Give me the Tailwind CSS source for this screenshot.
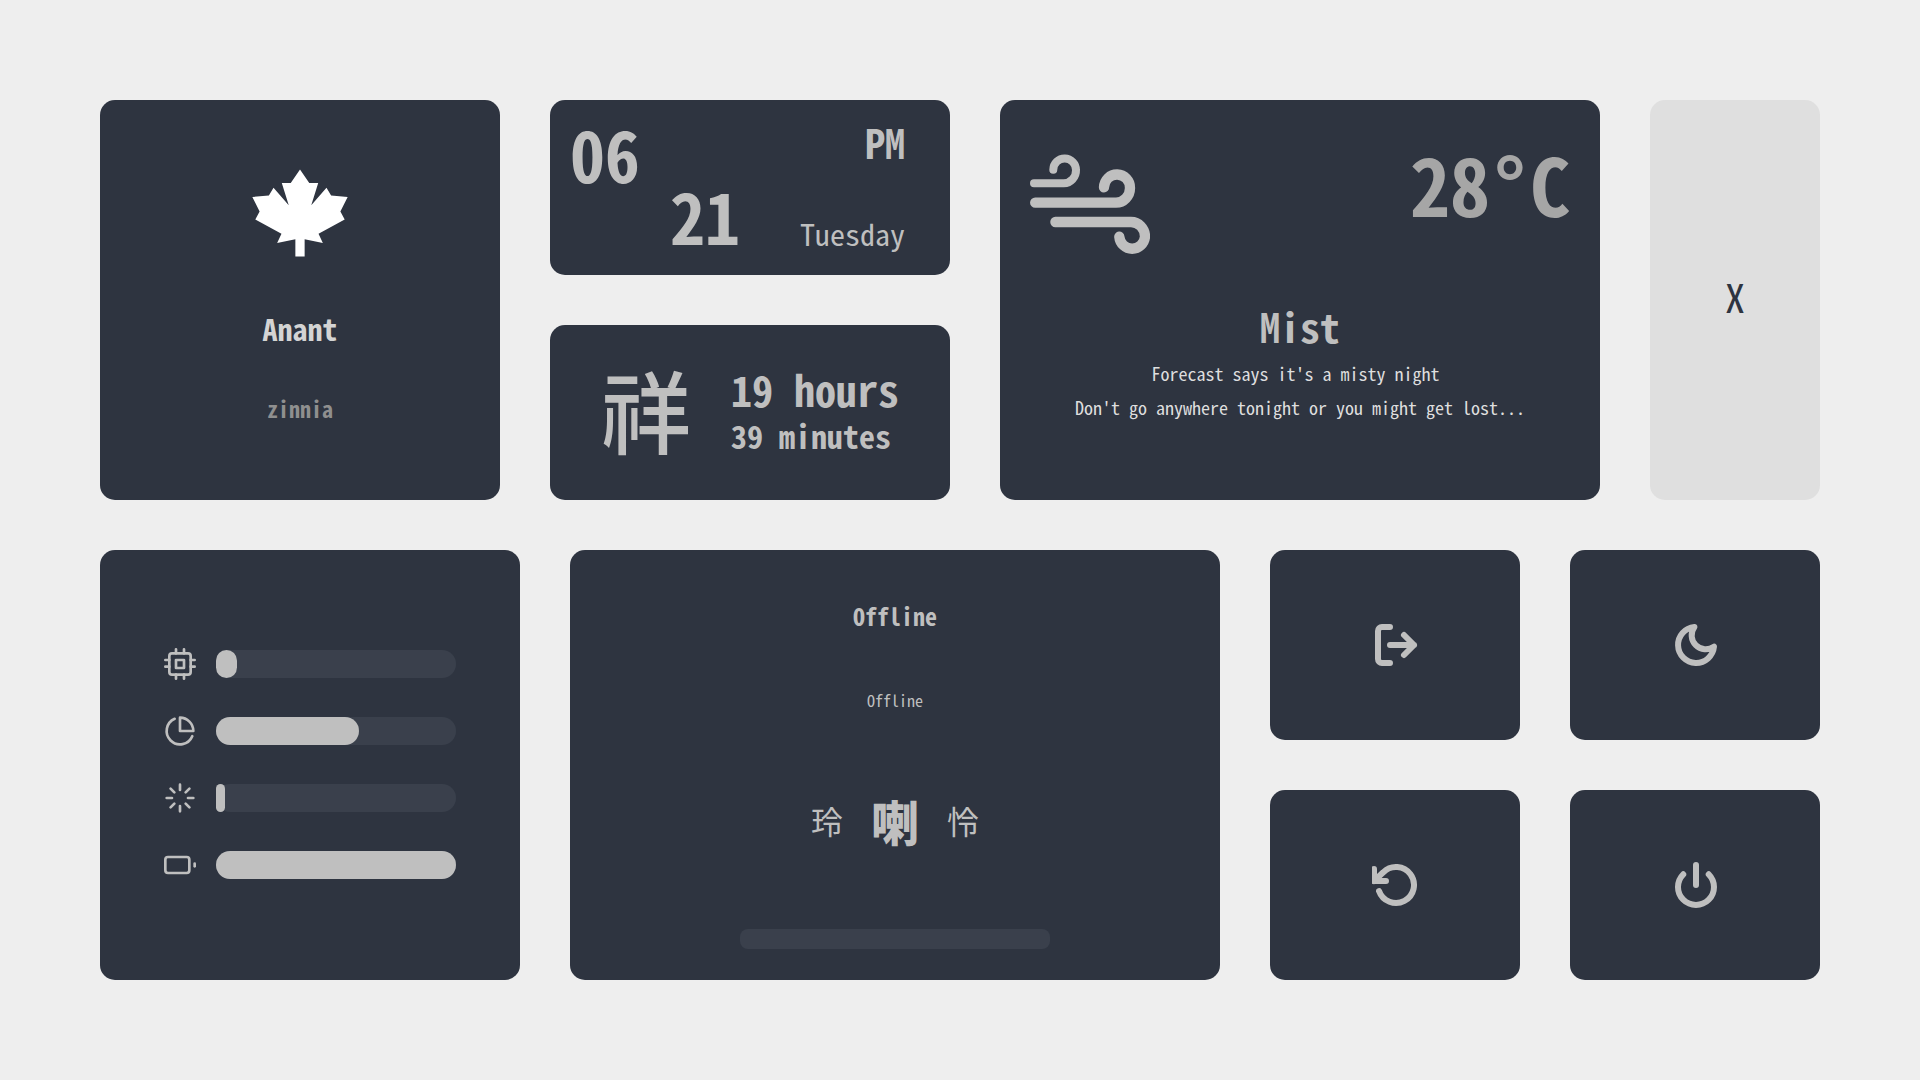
<!DOCTYPE html>
<html lang="en">
<head>
<meta charset="utf-8">
<title>Dashboard</title>
<script src="https://cdn.jsdelivr.net/npm/@tailwindcss/browser@4"></script>
</head>
<body class="min-h-screen bg-[#eeeeee] p-[100px] font-['Noto_Sans_Mono_CJK_JP','DejaVu_Sans_Mono','Noto_Sans_CJK_JP',monospace] text-[#bfbfbf]">
<main class="flex flex-col gap-[50px]">

  <div class="grid min-h-[400px] grid-cols-[400fr_400fr_600fr_170fr] gap-[50px]">
    <!-- Profile -->
    <section class="flex flex-col items-center rounded-[15px] bg-[#2e3440] pt-[69px]">
      <svg class="h-[88px] w-[96px] fill-white" viewBox="485 238 290 263" aria-hidden="true"><polygon points="630,238 658,279 685,279 664,346 710,293 724,317 774,321 752,365 765,389 686,432 699,460 644,449 644,501 616,501 616,449 561,460 574,432 495,389 508,365 486,321 536,317 550,293 596,346 575,279 602,279"/></svg>
      <h1 class="mt-[51px] text-[30px] leading-[40px] font-bold text-[#d4d4d4]">Anant</h1>
      <p class="mt-[45px] text-[22px] leading-[30px] font-bold text-[#8f8f8f]">zinnia</p>
    </section>

    <div class="grid grid-rows-2 gap-[50px]">
      <!-- Clock -->
      <section class="flex justify-between rounded-[15px] bg-[#2e3440] py-[22px] pr-[45px] pl-5">
        <div class="text-[70px] leading-[62px] font-bold">
          <div>06</div>
          <div class="pl-[100px]">21</div>
        </div>
        <div class="flex flex-col items-end justify-between leading-[40px]">
          <div class="text-[40px] font-bold">PM</div>
          <div class="text-[30px]">Tuesday</div>
        </div>
      </section>
      <!-- Uptime -->
      <section class="flex items-center justify-center gap-[40px] rounded-[15px] bg-[#2e3440]">
        <div class="pb-2.5 font-['Noto_Sans_CJK_KR',sans-serif] text-[90px] leading-[90px] font-medium">祥</div>
        <div class="font-bold">
          <div class="text-[42px] leading-[44px]">19 hours</div>
          <div class="text-[32px] leading-[48px]">39 minutes</div>
        </div>
      </section>
    </div>

    <!-- Weather -->
    <section class="rounded-[15px] bg-[#2e3440] px-[30px] pt-[42px]">
      <div class="flex items-start justify-between">
        <svg class="mt-3 h-[102px] w-[120px]" viewBox="0 0 120 102" fill="none" stroke="currentColor" stroke-linecap="round" aria-hidden="true">
          <path stroke-width="8" d="M4 29.3H33.7A12.8 12.8 0 0 0 46 16A11.35 11.35 0 0 0 23.3 15.7"/>
          <path stroke-width="10.3" d="M5.2 48.7H86A14 14.7 0 0 0 100 34A13 13.2 0 0 0 74 33.4"/>
          <path stroke-width="10.3" d="M25.4 68H101A14 14.7 0 0 1 115 82.7A12.9 13.2 0 0 1 89.3 82.7"/>
        </svg>
        <div class="text-[80px] leading-[80px] font-bold text-[#a6a6a6]">28<span class="inline-block w-10 text-center">°</span>C</div>
      </div>
      <div class="mt-[46px] text-center">
        <h2 class="text-[40px] leading-[48px] font-bold">Mist</h2>
        <p class="mt-1.5 text-[18px] leading-[34px] text-[#dedede]">Forecast says it's a misty night&nbsp;<br>Don't go anywhere tonight or you might get lost...</p>
      </div>
    </section>

    <button type="button" aria-label="Close" class="rounded-[15px] bg-[#dfdfdf] pb-2 text-[40px] leading-[40px] text-[#2e3440]">X</button>
  </div>

  <div class="grid min-h-[430px] grid-cols-[420fr_650fr_250fr_250fr] gap-[50px]">
    <!-- System usage -->
    <section class="flex flex-col justify-center gap-[39px] rounded-[15px] bg-[#2e3440] px-[64px] pb-0.5">
      <div class="flex h-7 items-center gap-5">
        <svg class="size-8 shrink-0" viewBox="0 0 24 24" fill="none" stroke="currentColor" stroke-width="2" stroke-linecap="round" stroke-linejoin="round" aria-hidden="true"><rect x="4" y="4" width="16" height="16" rx="2"/><rect x="9" y="9" width="6" height="6"/><path d="M9 1v3M15 1v3M9 20v3M15 20v3M20 9h3M20 14h3M1 9h3M1 14h3"/></svg>
        <div role="progressbar" aria-label="CPU" aria-valuenow="9" class="h-7 flex-1 rounded-full bg-[#3a404c]"><div class="h-full rounded-full bg-[#bfbfbf]" style="width:8.8%"></div></div>
      </div>
      <div class="flex h-7 items-center gap-5">
        <svg class="size-8 shrink-0" viewBox="0 0 24 24" fill="none" stroke="currentColor" stroke-width="2" stroke-linecap="round" stroke-linejoin="round" aria-hidden="true"><path d="M21.21 15.89A10 10 0 1 1 8 2.83"/><path d="M22 12A10 10 0 0 0 12 2v10z"/></svg>
        <div role="progressbar" aria-label="Memory" aria-valuenow="60" class="h-7 flex-1 rounded-full bg-[#3a404c]"><div class="h-full rounded-full bg-[#bfbfbf]" style="width:59.6%"></div></div>
      </div>
      <div class="flex h-7 items-center gap-5">
        <svg class="size-8 shrink-0" viewBox="0 0 24 24" fill="none" stroke="currentColor" stroke-width="2" stroke-linecap="round" stroke-linejoin="round" aria-hidden="true"><path d="M12 2v4M12 18v4M4.93 4.93l2.83 2.83M16.24 16.24l2.83 2.83M2 12h4M18 12h4M4.93 19.07l2.83-2.83M16.24 7.76l2.83-2.83"/></svg>
        <div role="progressbar" aria-label="Brightness" aria-valuenow="4" class="h-7 flex-1 rounded-full bg-[#3a404c]"><div class="h-full rounded-full bg-[#bfbfbf]" style="width:3.75%"></div></div>
      </div>
      <div class="flex h-7 items-center gap-5">
        <svg class="size-8 shrink-0" viewBox="0 0 24 24" fill="none" stroke="currentColor" stroke-width="2" stroke-linecap="round" stroke-linejoin="round" aria-hidden="true"><rect x="1" y="6" width="18" height="12" rx="2"/><path d="M23 13v-2"/></svg>
        <div role="progressbar" aria-label="Battery" aria-valuenow="100" class="h-7 flex-1 rounded-full bg-[#3a404c]"><div class="h-full rounded-full bg-[#bfbfbf]" style="width:100%"></div></div>
      </div>
    </section>

    <!-- Music player -->
    <section class="flex flex-col items-center rounded-[15px] bg-[#2e3440] pt-[50px]">
      <h2 class="text-[24px] leading-[32px] font-bold">Offline</h2>
      <p class="mt-[56px] text-[16px] leading-[24px]">Offline</p>
      <div class="mt-[84px] flex items-center gap-7 font-['Noto_Sans_CJK_KR',sans-serif]">
        <button type="button" aria-label="Previous" class="text-[32px] leading-[48px]">玲</button>
        <button type="button" aria-label="Play" class="text-[48px] leading-[48px] font-black">喇</button>
        <button type="button" aria-label="Next" class="text-[32px] leading-[48px]">怜</button>
      </div>
      <input type="range" aria-label="Track position" min="0" max="100" value="0" class="mt-[85px] h-5 w-[310px] appearance-none rounded-lg bg-[#3a404c] [&::-webkit-slider-thumb]:size-0 [&::-webkit-slider-thumb]:appearance-none">
    </section>

    <!-- Session controls -->
    <div class="col-span-2 grid grid-cols-2 grid-rows-2 gap-[50px]">
      <button type="button" aria-label="Log out" class="flex items-center justify-center rounded-[15px] bg-[#2e3440] pl-0.5">
        <svg class="size-12" viewBox="0 0 24 24" fill="none" stroke="currentColor" stroke-width="3" stroke-linecap="round" stroke-linejoin="round"><path d="M9 21H5a2 2 0 0 1-2-2V5a2 2 0 0 1 2-2h4"/><path d="M16 17l5-5-5-5M21 12H9"/></svg>
      </button>
      <button type="button" aria-label="Sleep" class="flex items-center justify-center rounded-[15px] bg-[#2e3440] pl-0.5">
        <svg class="size-12" viewBox="0 0 24 24" fill="none" stroke="currentColor" stroke-width="3" stroke-linecap="round" stroke-linejoin="round"><path d="M21 12.79A9 9 0 1 1 11.21 3 7 7 0 0 0 21 12.79z"/></svg>
      </button>
      <button type="button" aria-label="Restart" class="flex items-center justify-center rounded-[15px] bg-[#2e3440] pl-0.5">
        <svg class="size-12" viewBox="0 0 24 24" fill="none" stroke="currentColor" stroke-width="3" stroke-linecap="round" stroke-linejoin="round"><path d="M1 4v6h6"/><path d="M3.51 15a9 9 0 1 0 2.13-9.36L1 10"/></svg>
      </button>
      <button type="button" aria-label="Power off" class="flex items-center justify-center rounded-[15px] bg-[#2e3440] pl-0.5">
        <svg class="size-12" viewBox="0 0 24 24" fill="none" stroke="currentColor" stroke-width="3" stroke-linecap="round" stroke-linejoin="round"><path d="M18.36 6.64a9 9 0 1 1-12.73 0"/><path d="M12 2v10"/></svg>
      </button>
    </div>
  </div>
</main>
</body>
</html>
